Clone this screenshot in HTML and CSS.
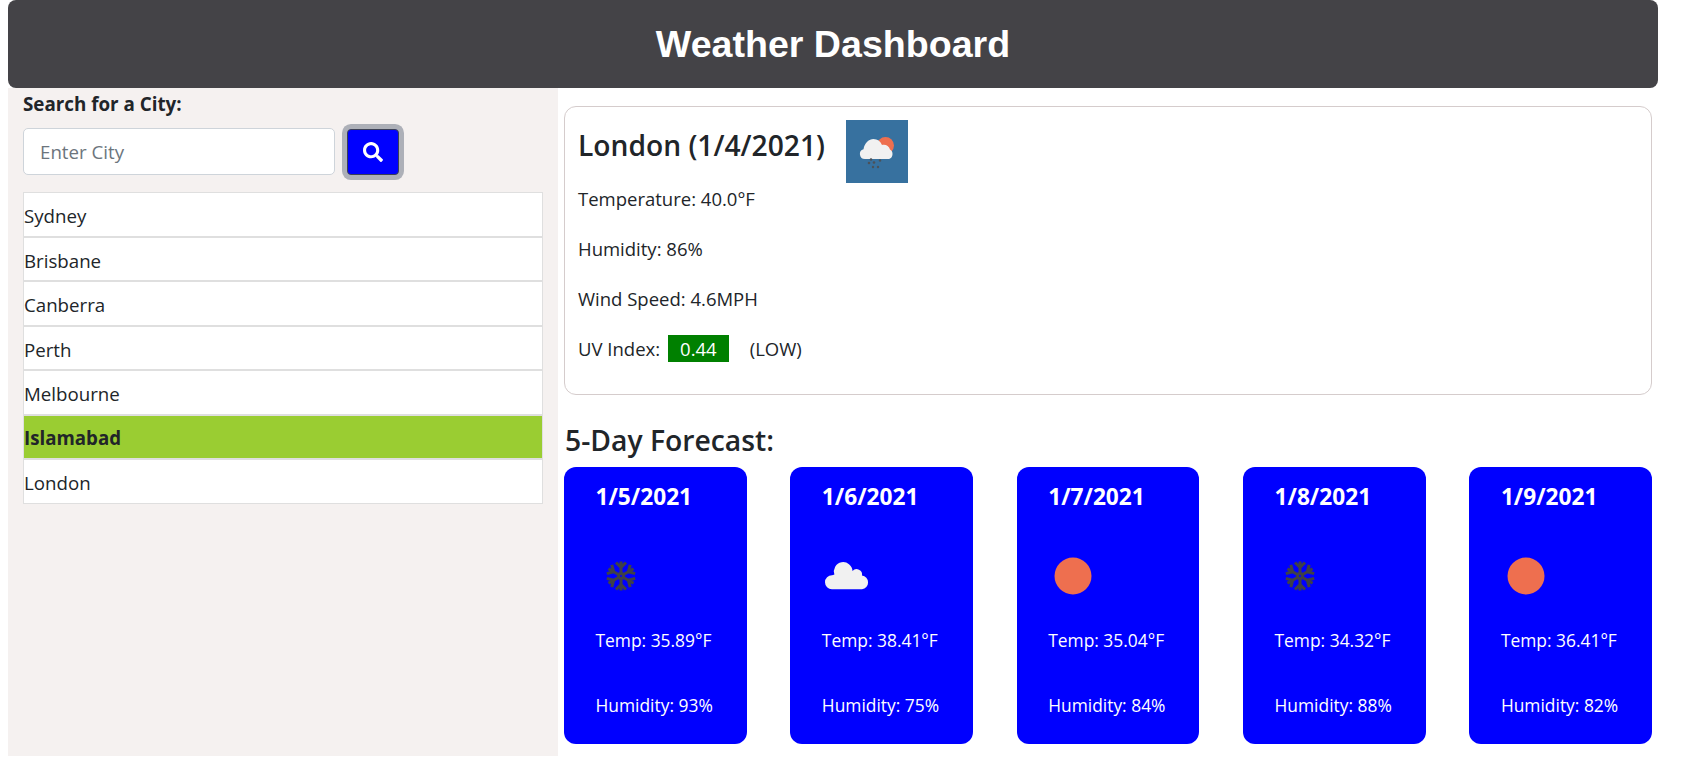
FILE: index.html
```html
<!DOCTYPE html>
<html lang="en">
<head>
    <meta charset="UTF-8">
    <meta name="viewport" content="width=device-width, initial-scale=1.0">
    <title>Weather Dashboard</title>
    <link rel="stylesheet" href="styles.css">
</head>
<body>
    <svg class="defs" width="0" height="0">
        <defs>
            <g id="arm">
                <path d="M24 24V9.500M24 15.500l-5-5M24 15.500l5-5"/>
            </g>
            <symbol id="snow" viewBox="0 0 48 60">
                <g transform="translate(1 6)" fill="none" stroke="#3f4048" stroke-width="3">
                    <g id="flake">
                        <use href="#arm"/>
                        <use href="#arm" transform="rotate(60 24 24)"/>
                        <use href="#arm" transform="rotate(120 24 24)"/>
                        <use href="#arm" transform="rotate(180 24 24)"/>
                        <use href="#arm" transform="rotate(240 24 24)"/>
                        <use href="#arm" transform="rotate(300 24 24)"/>
                    </g>
                    <circle cx="24" cy="24" r="2.500" fill="#0000ff"/>
                </g>
            </symbol>
            <symbol id="sun" viewBox="0 0 48 60">
                <circle cx="25" cy="30" r="18.500" fill="#ee6f4f"/>
            </symbol>
            <symbol id="cloud" viewBox="0 0 48 60">
                <path fill="#f1f1f1" d="M10 43.300A7 7 0 0 1 10 29.300Q11 29 12.400 28.400A9.300 9.300 0 1 1 30.500 25A5.500 5.500 0 0 1 40 29.600A6.900 6.900 0 0 1 40 43.300Z"/>
            </symbol>
        </defs>
    </svg>

    <header class="top-bar">
        <h1>Weather Dashboard</h1>
    </header>

    <div class="content">
        <aside class="sidebar">
            <label class="search-label" for="cityInput">Search for a City:</label>
            <form class="search-row">
                <input id="cityInput" class="search-input" type="text" placeholder="Enter City">
                <button class="search-btn" type="button" aria-label="Search">
                    <svg viewBox="0 0 512 512" width="20" height="20"><path fill="#fff" d="M505 442.700L405.300 343c-4.500-4.500-10.600-7-17-7H372c27.600-35.300 44-79.700 44-128C416 93.100 322.900 0 208 0S0 93.100 0 208s93.100 208 208 208c48.300 0 92.700-16.400 128-44v16.300c0 6.400 2.500 12.500 7 17l99.700 99.700c9.400 9.400 24.600 9.400 33.900 0l28.300-28.300c9.400-9.400 9.400-24.600.1-34zM208 336c-70.700 0-128-57.200-128-128 0-70.700 57.200-128 128-128 70.700 0 128 57.200 128 128 0 70.700-57.200 128-128 128z"/></svg>
                </button>
            </form>
            <ul class="city-list">
                <li>Sydney</li>
                <li>Brisbane</li>
                <li>Canberra</li>
                <li>Perth</li>
                <li>Melbourne</li>
                <li class="active">Islamabad</li>
                <li>London</li>
            </ul>
        </aside>

        <main class="main">
            <section class="today">
                <div class="today-head">
                    <h2>London (1/4/2021)</h2>
                    <svg class="today-icon" viewBox="0 0 62 63" width="62" height="63">
                        <rect width="62" height="63" fill="#37719f"/>
                        <circle cx="39.500" cy="25.500" r="8.500" fill="#ee6f4f"/>
                        <path fill="#f1f1f1" d="M19 39A5 5 0 0 1 17.500 29.200C18.500 23 23 19 27.500 19C31.500 19 34.500 21 36 25C39.500 24 43 26 44 29.500C46 30.500 46.500 32.500 46.500 34C46.500 37 44.500 39 42 39Z"/>
                        <g fill="#4b5159">
                            <circle cx="25" cy="39.500" r="1.300"/><circle cx="34" cy="40.500" r="1.200"/>
                            <circle cx="23" cy="43" r="1.300"/><circle cx="28" cy="42.500" r="1.300"/>
                            <circle cx="27" cy="47" r="1.200"/><circle cx="32" cy="47" r="1.200"/>
                        </g>
                    </svg>
                </div>
                <p>Temperature: 40.0°F</p>
                <p>Humidity: 86%</p>
                <p>Wind Speed: 4.6MPH</p>
                <p>UV Index: <span class="uv">0.44</span> <span class="uv-label">(LOW)</span></p>
            </section>

            <h3 class="forecast-title">5-Day Forecast:</h3>
            <div class="forecast">
                <article class="day">
                    <h4>1/5/2021</h4>
                    <svg class="day-icon"><use href="#snow"/></svg>
                    <p class="day-temp">Temp: 35.89°F</p>
                    <p class="day-hum">Humidity: 93%</p>
                </article>
                <article class="day">
                    <h4>1/6/2021</h4>
                    <svg class="day-icon"><use href="#cloud"/></svg>
                    <p class="day-temp">Temp: 38.41°F</p>
                    <p class="day-hum">Humidity: 75%</p>
                </article>
                <article class="day">
                    <h4>1/7/2021</h4>
                    <svg class="day-icon"><use href="#sun"/></svg>
                    <p class="day-temp">Temp: 35.04°F</p>
                    <p class="day-hum">Humidity: 84%</p>
                </article>
                <article class="day">
                    <h4>1/8/2021</h4>
                    <svg class="day-icon"><use href="#snow"/></svg>
                    <p class="day-temp">Temp: 34.32°F</p>
                    <p class="day-hum">Humidity: 88%</p>
                </article>
                <article class="day">
                    <h4>1/9/2021</h4>
                    <svg class="day-icon"><use href="#sun"/></svg>
                    <p class="day-temp">Temp: 36.41°F</p>
                    <p class="day-hum">Humidity: 82%</p>
                </article>
            </div>
        </main>
    </div>
</body>
</html>
```

FILE: styles.css
```css
* {
    box-sizing: border-box;
}
body {
    margin: 0;
    padding: 0 46px 0 8px;
    background-color: white;
    color: #212529;
    font-family: "Open Sans", sans-serif;
    font-size: 18.7px;
}
h1, h2, h3, h4, p, ul {
    margin: 0;
    padding: 0;
}
.defs {
    position: absolute;
}
.top-bar {
    height: 88px;
    padding-top: 1px;
    display: flex;
    align-items: center;
    justify-content: center;
    background-color: #444347;
    border-radius: 8px;
}
.top-bar h1 {
    color: white;
    font-family: "Liberation Sans", Arial, sans-serif;
    font-size: 37.6px;
    line-height: 1;
}
.content {
    display: flex;
}
.sidebar {
    width: 550px;
    height: 668px;
    padding: 5px 15.5px 0 15px;
    background-color: #f5f1f0;
}
.search-label {
    display: block;
    font-size: 18.8px;
    font-weight: 700;
    line-height: 22px;
}
.search-row {
    display: flex;
    align-items: flex-end;
    margin-top: 13px;
}
.search-input {
    width: 311.5px;
    height: 47px;
    padding: 0 16px;
    border: 1px solid #ced4da;
    border-radius: 5px;
    background: white;
    font-family: inherit;
    font-size: 18.7px;
}
.search-input::placeholder {
    color: #6c757d;
}
.search-btn {
    width: 51.6px;
    height: 46px;
    margin-left: 12.5px;
    padding: 0;
    display: flex;
    align-items: center;
    justify-content: center;
    background-color: #0000ff;
    border: 1px solid #3a3f55;
    border-radius: 4px;
    box-shadow: 0 0 0 5px #adb0b8;
}
.city-list {
    margin-top: 17px;
    list-style: none;
}
.city-list li {
    height: 44.5px;
    padding-left: 0;
    border: 1px solid #dfdfdf;
    background-color: white;
    line-height: 45px;
}
.city-list li.active {
    background-color: #9acd32;
    font-weight: 700;
    line-height: 43.5px;
}
.main {
    flex: 1;
    padding: 18px 6px 0;
}
.today {
    height: 289px;
    padding: 13px 13px 0;
    background-color: white;
    border: 1px solid #d5cccc;
    border-radius: 12px;
}
.today-head {
    display: flex;
    align-items: flex-start;
    height: 65px;
}
.today-head h2 {
    font-size: 28.2px;
    font-weight: 600;
    line-height: 51px;
}
.today-icon {
    margin-left: 21px;
}
.today p {
    font-size: 18.5px;
    line-height: 27px;
    margin-bottom: 23px;
}
.uv {
    display: inline-block;
    width: 61px;
    height: 27px;
    margin: 0 16px 0 3px;
    background-color: #008000;
    color: white;
    text-align: center;
    line-height: 27px;
}
.forecast-title {
    margin-top: 28px;
    margin-left: 1px;
    font-size: 28.3px;
    font-weight: 600;
    line-height: 34px;
}
.forecast {
    display: flex;
    justify-content: space-between;
    margin-top: 10px;
}
.day {
    width: 182.6px;
    height: 277px;
    padding: 15px 0 0 31.5px;
    background-color: #0000ff;
    border-radius: 12px;
    color: white;
}
.day h4 {
    font-size: 22.7px;
    font-weight: 700;
    line-height: 30px;
}
.day-icon {
    display: block;
    width: 48px;
    height: 60px;
    margin-top: 34px;
}
.day-temp, .day-hum {
    font-size: 17.4px;
    line-height: 27px;
}
.day-temp {
    margin-top: 21px;
}
.day-hum {
    margin-top: 38px;
}
```
